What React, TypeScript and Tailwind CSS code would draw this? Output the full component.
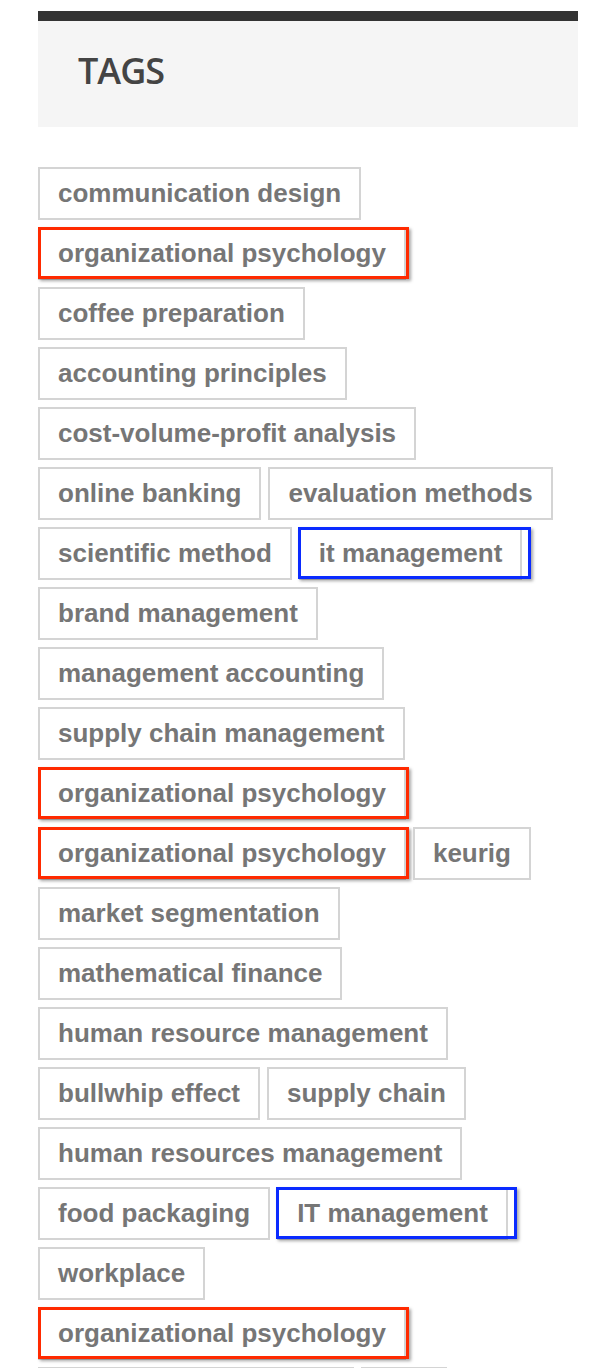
import React from "react";

type Mark = "red" | "blue" | undefined;

interface Tag {
  label: string;
  mark?: Mark;
}

const tags: Tag[] = [
  { label: "communication design" },
  { label: "organizational psychology", mark: "red" },
  { label: "coffee preparation" },
  { label: "accounting principles" },
  { label: "cost-volume-profit analysis" },
  { label: "online banking" },
  { label: "evaluation methods" },
  { label: "scientific method" },
  { label: "it management", mark: "blue" },
  { label: "brand management" },
  { label: "management accounting" },
  { label: "supply chain management" },
  { label: "organizational psychology", mark: "red" },
  { label: "organizational psychology", mark: "red" },
  { label: "keurig" },
  { label: "market segmentation" },
  { label: "mathematical finance" },
  { label: "human resource management" },
  { label: "bullwhip effect" },
  { label: "supply chain" },
  { label: "human resources management" },
  { label: "food packaging" },
  { label: "IT management", mark: "blue" },
  { label: "workplace" },
  { label: "organizational psychology", mark: "red" },
  { label: "strategic management" },
  { label: "risk" },
];

function TagChip({ tag }: { tag: Tag }) {
  return (
    <a
      href="#"
      className="relative block border-2 border-[#d4d4d4] bg-white px-[18px] py-[10px] text-[26px] leading-[29px] font-bold text-[#767676]"
      style={{ fontFamily: '"Liberation Sans", Arial, sans-serif' }}
    >
      {tag.label}
      {tag.mark === "red" && (
        <span className="pointer-events-none absolute -top-[2px] -left-[2px] -right-[5px] -bottom-[1px] border-[3px] border-[#ff2a00] shadow-[2px_2px_3px_rgba(0,0,0,0.35)]" />
      )}
      {tag.mark === "blue" && (
        <span className="pointer-events-none absolute -top-[2px] -left-[3px] -right-[11px] -bottom-[1px] border-[3px] border-[#0a2bff] shadow-[2px_2px_3px_rgba(0,0,0,0.35)]" />
      )}
    </a>
  );
}

export default function App() {
  return (
    <div className="min-h-screen bg-white pt-[11px] pl-[38px] pr-[16px]">
      <aside>
        <div className="border-t-[10px] border-[#333333] bg-[#f5f5f5] pt-[32px] pb-[38px] pl-[40px]">
          <h2
            className="text-[36px] leading-none font-semibold tracking-[-1px] text-[#444444]"
            style={{ fontFamily: '"Open Sans", sans-serif' }}
          >
            TAGS
          </h2>
        </div>
        <div className="mt-[40px] flex flex-wrap items-start gap-x-[7px] gap-y-[7px]">
          {tags.map((t, i) => (
            <TagChip key={i} tag={t} />
          ))}
        </div>
      </aside>
    </div>
  );
}
